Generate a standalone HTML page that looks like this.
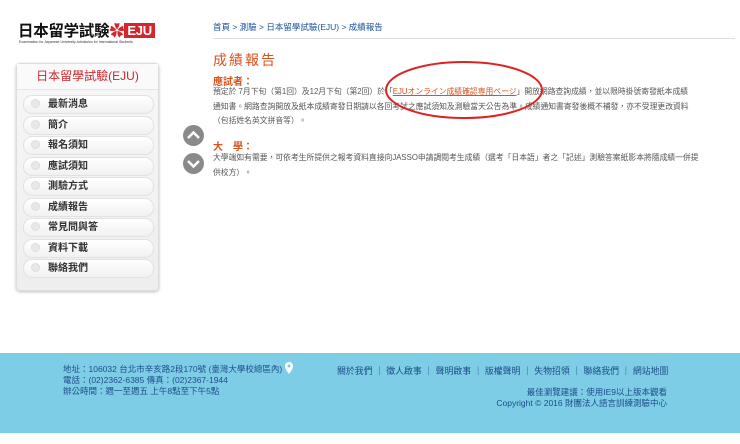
<!DOCTYPE html>
<html><head><meta charset="utf-8"><style>
body{margin:0;width:740px;height:444px;background:#fff;font-family:"Liberation Sans","Noto Sans CJK TC",sans-serif;position:relative;overflow:hidden}
.a{position:absolute;white-space:nowrap}
.logo{left:18px;top:19px;font-size:15.5px;font-weight:bold;color:#111;letter-spacing:-0.3px}
.eju{display:inline-block;background:#d5262e;color:#fff;font-size:13px;padding:0 3px;line-height:15px;vertical-align:1px}
.sub{left:19px;top:40px;font-size:3.5px;color:#333}
.side{left:16px;top:63px;width:141px;height:226px;border:1px solid #ddd;border-radius:4px;background:linear-gradient(#f7f7f7,#eee);box-shadow:0 1px 3px rgba(0,0,0,.25)}
.side .h{position:absolute;top:0;left:0;right:0;height:25px;text-align:center;line-height:25px;color:#c8282e;font-size:12px;background:#fafafa;border-bottom:1px solid #e6e6e6}
.it{position:absolute;left:6px;width:129px;height:17px;border:1px solid #e2e2e2;border-radius:9px;background:linear-gradient(#fff,#f1f1f1);font-size:10px;font-weight:bold;color:#333;line-height:17px;box-sizing:content-box}
.it i{display:inline-block;width:7px;height:7px;border-radius:50%;background:#e8e8e8;border:1px solid #ddd;margin:0 8px 0 7px;vertical-align:-1px}
.bc{left:213px;top:21px;font-size:8.5px;color:#1a4f9c}
.hr{left:213px;top:38px;width:522px;height:1px;background:#ddd}
.t{left:213px;top:50px;font-size:14px;color:#d9531e;letter-spacing:2px}
.h2{font-size:10px;color:#d9531e;font-weight:bold;left:213px}
.p{left:213px;font-size:7.8px;color:#555;line-height:14.5px}
.ft{left:0;top:353px;width:740px;height:80px;background:#7ecde6}
.f{font-size:8.5px;color:#1c4d8a}
.circ{left:183px;width:21px;height:21px;border-radius:50%;background:#8a8a8a}
</style></head><body>
<div class="a logo">日本留学試験<span style="color:#d5262e">✿</span><span class="eju">EJU</span></div>
<div class="a sub">Examination for Japanese University Admission for International Students</div>
<div class="a side"><div class="h">日本留學試驗(EJU)</div>
<div class="it" style="top:31px"><i></i>最新消息</div>
<div class="it" style="top:52px"><i></i>簡介</div>
<div class="it" style="top:72px"><i></i>報名須知</div>
<div class="it" style="top:93px"><i></i>應試須知</div>
<div class="it" style="top:113px"><i></i>測驗方式</div>
<div class="it" style="top:134px"><i></i>成績報告</div>
<div class="it" style="top:154px"><i></i>常見問與答</div>
<div class="it" style="top:175px"><i></i>資料下載</div>
<div class="it" style="top:195px"><i></i>聯絡我們</div>
</div>
<div class="a bc">首頁 &gt; 測驗 &gt; 日本留學試驗(EJU) &gt; 成績報告</div>
<div class="a hr"></div>
<div class="a t">成績報告</div>
<div class="a h2" style="top:73px">應試者：</div>
<div class="a p" style="top:85px">預定於 7月下旬（第1回）及12月下旬（第2回）於「<span style="color:#d9531e;text-decoration:underline">EJUオンライン成績確認専用ページ</span>」開放網路查詢成績，並以限時掛號寄發紙本成績<br>通知書。網路查詢開放及紙本成績寄發日期請以各回考試之應試須知及測驗當天公告為準。成績通知書寄發後概不補發，亦不受理更改資料<br>（包括姓名英文拼音等）。</div>
<div class="a h2" style="top:138px">大　學：</div>
<div class="a p" style="top:151px">大學端如有需要，可依考生所提供之報考資料直接向JASSO申請調閱考生成績（選考「日本語」者之「記述」測驗答案紙影本將隨成績一併提<br>供校方）。</div>
<svg class="a" style="left:382px;top:60px" width="165" height="64"><ellipse cx="82" cy="30" rx="78" ry="28" fill="none" stroke="#d22" stroke-width="2"/></svg>
<div class="a circ" style="top:125px"><svg width="21" height="21"><path d="M5 13 L10.5 7.5 L16 13" fill="none" stroke="#fff" stroke-width="2.5"/></svg></div>
<div class="a circ" style="top:153px"><svg width="21" height="21"><path d="M5 8 L10.5 13.5 L16 8" fill="none" stroke="#fff" stroke-width="2.5"/></svg></div>
<div class="a ft"></div>
<div class="a f" style="left:63px;top:364px;line-height:11px">地址：106032 台北市辛亥路2段170號 (臺灣大學校總區內)<br>電話：(02)2362-6385 傳真：(02)2367-1944<br>辦公時間：週一至週五 上午8點至下午5點</div>
<svg class="a" style="left:284px;top:361px" width="10" height="14"><path d="M5 13 C1 8 1 6 1 5 A4 4 0 0 1 9 5 C9 6 9 8 5 13Z" fill="#fff"/><circle cx="5" cy="5" r="1.5" fill="#7ecde6"/></svg>
<div class="a f" style="left:337px;top:364px;font-size:8.9px">關於我們 ｜ 徵人啟事 ｜ 聲明啟事 ｜ 版權聲明 ｜ 失物招領 ｜ 聯絡我們 ｜ 網站地圖</div>
<div class="a f" style="right:73px;top:387px;text-align:right;line-height:11px">最佳瀏覽建議：使用IE9以上版本觀看<br>Copyright © 2016 財團法人語言訓練測驗中心</div>
</body></html>
